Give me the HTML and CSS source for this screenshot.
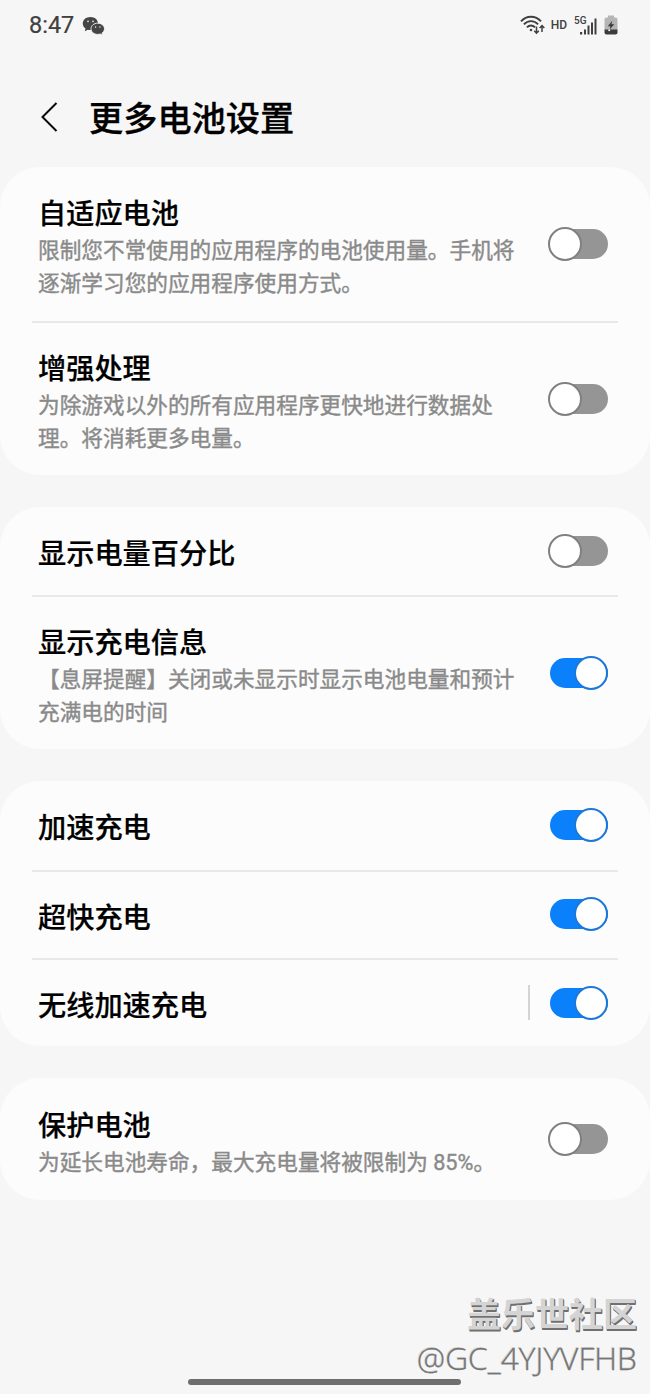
FILE: index.html
```html
<!DOCTYPE html>
<html lang="zh-CN">
<head>
    <meta charset="UTF-8">
    <meta name="viewport" content="width=device-width, initial-scale=1.0">
    <title>更多电池设置</title>
    <link rel="stylesheet" href="styles.css">
</head>
<body>

<!-- Status bar -->
<div class="status-bar">
    <div class="status-left">
        <span class="time">8:47</span>
        <svg class="icon-chat" width="24" height="20" viewBox="0 0 24 20">
            <path d="M8.500 1C4 1 .8 3.800.8 7.400c0 2.100 1.100 3.900 2.700 5.100l-.7 2.700 3-1.500c1 .3 2 .4 3.200.3 4.200-.2 7-3 7-6.600C16 3.800 12.700 1 8.500 1z" fill="#454545"/>
            <path d="M15.700 7.200c-3.800 0-6.700 2.500-6.700 5.600s2.900 5.600 6.700 5.600c.9 0 1.700-.1 2.500-.4l2.300 1.300-.5-2.200c1.500-1 2.500-2.600 2.500-4.300 0-3.100-3-5.600-6.800-5.600z" fill="#454545" stroke="#f6f6f6" stroke-width=".9"/>
            <circle cx="6" cy="5.400" r=".8" fill="#f6f6f6"/>
            <circle cx="11" cy="5.400" r=".8" fill="#f6f6f6"/>
            <circle cx="13.600" cy="11" r=".7" fill="#f6f6f6"/>
            <circle cx="18" cy="11" r=".7" fill="#f6f6f6"/>
        </svg>
    </div>
    <div class="status-right">
        <svg class="icon-wifi" width="26" height="20" viewBox="0 0 26 20">
            <g fill="none" stroke="#404040" stroke-width="1.900">
                <path d="M1 6.300C6.500.2 15.500.2 21 6.300"/>
                <path d="M3.900 9.300c4-4.300 10.200-4.300 14.200 0"/>
                <path d="M6.900 12.300c2.400-2.500 5.800-2.500 8.200 0"/>
                <path d="M16.500 11.500v6.500M14.200 15.800l2.300 2.400 2.300-2.400" stroke-width="1.500"/>
                <path d="M22 17v-6.500M19.700 13l2.300-2.500 2.300 2.500" stroke-width="1.500"/>
            </g>
            <circle cx="11" cy="15" r="1.300" fill="#404040"/>
        </svg>
        <span class="hd">HD</span>
        <div class="signal">
            <span class="net">5G</span>
            <svg width="18" height="17" viewBox="0 0 18 17" fill="#404040">
                <rect x="0" y="14" width="2.200" height="2.500"/>
                <rect x="4" y="11.500" width="2" height="5"/>
                <rect x="7.500" y="7.500" width="2" height="9"/>
                <rect x="11" y="4.500" width="2" height="12"/>
                <rect x="14.500" y="0.500" width="2" height="16"/>
            </svg>
        </div>
        <svg class="icon-battery" width="14" height="20" viewBox="0 0 14 20">
            <path d="M4 .5h6v2h1.500a2 2 0 0 1 2 2V15H.5V4.500a2 2 0 0 1 2-2H4z" fill="#b5b5b5"/>
            <path d="M.5 14.500h13v3a2 2 0 0 1-2 2h-9a2 2 0 0 1-2-2z" fill="#3c3c3c"/>
            <path d="M8.300 5.800L3.800 11.300h2.700L5.700 14.500 10.300 9.300H7.500z" fill="#3c3c3c"/>
            <circle cx="5.200" cy="15.300" r="1" fill="#f6f6f6"/>
        </svg>
    </div>
</div>

<!-- Header -->
<header class="header">
    <svg class="back" width="18" height="32" viewBox="0 0 18 32">
        <path d="M16.500 2L2.500 16l14 14" fill="none" stroke="#0a0a0a" stroke-width="2"/>
    </svg>
    <h1>更多电池设置</h1>
</header>

<!-- Settings -->
<main class="settings">
    <section class="card">
        <div class="row tall">
            <div class="text">
                <h2>自适应电池</h2>
                <p>限制您不常使用的应用程序的电池使用量。手机将逐渐学习您的应用程序使用方式。</p>
            </div>
            <div class="toggle"></div>
        </div>
        <div class="row tall">
            <div class="text">
                <h2>增强处理</h2>
                <p>为除游戏以外的所有应用程序更快地进行数据处理。将消耗更多电量。</p>
            </div>
            <div class="toggle"></div>
        </div>
    </section>

    <section class="card">
        <div class="row">
            <div class="text"><h2>显示电量百分比</h2></div>
            <div class="toggle"></div>
        </div>
        <div class="row tall">
            <div class="text">
                <h2>显示充电信息</h2>
                <p>【息屏提醒】关闭或未显示时显示电池电量和预计充满电的时间</p>
            </div>
            <div class="toggle on"></div>
        </div>
    </section>

    <section class="card">
        <div class="row">
            <div class="text"><h2>加速充电</h2></div>
            <div class="toggle on"></div>
        </div>
        <div class="row">
            <div class="text"><h2>超快充电</h2></div>
            <div class="toggle on"></div>
        </div>
        <div class="row">
            <div class="text"><h2>无线加速充电</h2></div>
            <div class="separator"></div>
            <div class="toggle on"></div>
        </div>
    </section>

    <section class="card">
        <div class="row medium">
            <div class="text">
                <h2>保护电池</h2>
                <p>为延长电池寿命，最大充电量将被限制为 85%。</p>
            </div>
            <div class="toggle"></div>
        </div>
    </section>
</main>

<!-- Watermark over the bottom of the screen -->
<div class="watermark">
    <div class="community">盖乐世社区</div>
    <div class="user">@GC_4YJYVFHB</div>
</div>
<div class="home-bar"></div>

</body>
</html>
```
FILE: styles.css
```css
* {
    box-sizing: border-box;
}

body {
    margin: 0;
    position: relative;
    height: 1394px;
    overflow: hidden;
    background-color: #f6f6f6;
    color: #000;
    font-family: Roboto, 'Noto Sans CJK SC', sans-serif;
}

h1, h2, p {
    margin: 0;
}

.status-bar {
    display: flex;
    justify-content: space-between;
    height: 50px;
    padding: 0 32px 0 29px;
    align-items: center;
    color: #404040;
}

.status-left, .status-right {
    display: flex;
    align-items: center;
}

.time {
    font-size: 23.500px;
    line-height: 28px;
    -webkit-text-stroke: 0.2px #404040;
}

.icon-chat {
    margin: 2px 0 0 8px;
}

.hd {
    margin-left: 5px;
    font-size: 12px;
    font-weight: 500;
}

.signal {
    position: relative;
    height: 17px;
    margin: 2px 6px 0 13px;
}

.signal svg {
    display: block;
}

.net {
    position: absolute;
    left: -6px;
    top: -3px;
    font-size: 10px;
    line-height: 11px;
    font-weight: 500;
}

.header {
    display: flex;
    align-items: center;
    height: 117px;
    padding: 36px 0 0 40px;
}

.back {
    margin-bottom: 19px;
}

.header h1 {
    margin: 0 0 16px 31px;
    font-size: 34.200px;
    line-height: 48px;
    font-weight: 500;
    -webkit-text-stroke: 0.3px #000;
}

.settings {
    display: flex;
    flex-direction: column;
    gap: 32px;
}

.card {
    padding: 0 32px;
    border-radius: 40px;
    background-color: #fcfcfc;
}

.row {
    display: flex;
    align-items: center;
    height: 88.300px;
    padding: 0 10px 0 6px;
}

.row.tall {
    height: 154px;
}

.row.medium {
    height: 122px;
}

.row + .row {
    border-top: 2px solid #e8e8e8;
}

.text {
    flex: 1;
    padding-top: 8px;
}

.text h2 {
    font-size: 28.200px;
    line-height: 38px;
    font-weight: 500;
    -webkit-text-stroke: 0.2px #000;
}

.text p {
    width: 482px;
    font-size: 21.660px;
    line-height: 33px;
    color: #8a8a8a;
    -webkit-text-stroke: 0.4px #8a8a8a;
}

.separator {
    width: 2px;
    height: 35px;
    margin: 0 20px 2px 0;
    background-color: #d4d4d4;
}

.toggle {
    position: relative;
    width: 58px;
    height: 30px;
    margin-bottom: 1px;
    border-radius: 15px;
    background-color: #959595;
}

.toggle::after {
    content: '';
    position: absolute;
    box-sizing: border-box;
    top: -2px;
    left: -2px;
    width: 34px;
    height: 34px;
    border: 1.500px solid #808080;
    border-width: 2px;
    border-radius: 50%;
    background-color: #fff;
}

.toggle.on {
    background-color: #0a80fa;
}

.toggle.on::after {
    left: auto;
    right: 0;
    border-color: #1c78d8;
}

.watermark {
    position: absolute;
    right: 13px;
    bottom: 15px;
    text-align: right;
}

.community {
    font-family: 'Noto Sans CJK SC', sans-serif;
    font-size: 34px;
    line-height: 46px;
    font-weight: bold;
    color: #d4d4d4;
    text-shadow: 1px 1px 0 #707070, 1px 2px 0 #707070;
    margin-bottom: 1px;
}

.user {
    font-family: 'Open Sans', sans-serif;
    font-size: 31.700px;
    line-height: 42px;
    font-weight: 300;
    color: #757575;
    -webkit-text-stroke: 0.3px #757575;
    text-shadow: -1px -1px 0 #dcdcdc;
}

.home-bar {
    position: absolute;
    left: 188px;
    bottom: 9px;
    width: 273px;
    height: 6px;
    border-radius: 3px;
    background-color: #6e6e6e;
}
```
